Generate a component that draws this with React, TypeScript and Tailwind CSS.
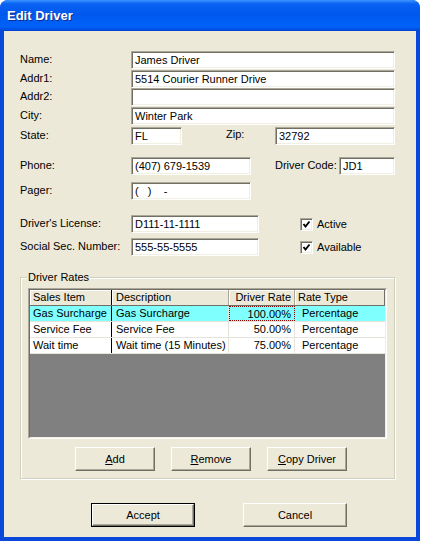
const font = "font-['Liberation_Sans',Arial,sans-serif]";

const sunken =
  "bg-white border border-t-[#aca899] border-l-[#aca899] border-r-white border-b-white shadow-[inset_1px_1px_0_#716f64,inset_-1px_-1px_0_#f1efe2]";

function Field({ value, w }: { value: string; w: string }) {
  return (
    <div className={`${sunken} ${w} h-[18px] shrink-0 px-[3px] text-[11px] leading-[16px] text-black whitespace-pre`}>
      {value}
    </div>
  );
}

function Label({ text, w = "w-[111px]" }: { text: string; w?: string }) {
  return <div className={`${w} shrink-0 text-[11px] leading-[13px] text-black -mt-[2px]`}>{text}</div>;
}

function Check({ label }: { label: string }) {
  return (
    <div className="flex items-center gap-[4px]">
      <div className={`${sunken} flex h-[13px] w-[13px] items-center justify-center`}>
        <svg width="9" height="9" viewBox="0 0 9 9">
          <path d="M1.5 4 L3.5 6.5 L7.5 1.5" fill="none" stroke="#000" strokeWidth="1.9" />
        </svg>
      </div>
      <span className="text-[11px] leading-[13px] text-black">{label}</span>
    </div>
  );
}

function Button({ children, def = false, w }: { children: React.ReactNode; def?: boolean; w: string }) {
  const inner = (
    <div className="flex h-full w-full items-center justify-center border border-t-white border-l-white border-r-[#716f64] border-b-[#716f64] bg-[#ece9d8] shadow-[inset_-1px_-1px_0_#aca899] text-[11px] text-black">
      {children}
    </div>
  );
  return (
    <div className={`${w} h-[24px] shrink-0 ${def ? "border border-black" : ""}`}>{inner}</div>
  );
}

const cols = ["w-[82px]", "w-[117px]", "w-[66px]", "w-[90px]"];

const rows = [
  ["Gas Surcharge", "Gas Surcharge", "100.00%", "Percentage"],
  ["Service Fee", "Service Fee", "50.00%", "Percentage"],
  ["Wait time", "Wait time (15 Minutes)", "75.00%", "Percentage"],
];

function Grid() {
  return (
    <div className="h-[151px] w-[359px] border border-t-[#aca899] border-l-[#aca899] border-r-white border-b-white">
      <div className="flex h-full w-full flex-col border border-t-[#716f64] border-l-[#716f64] border-r-[#f1efe2] border-b-[#f1efe2] bg-[#808080]">
        <div className="flex h-[16px] border-b border-[#716f64] bg-[#ece9d8] text-[11px] leading-[14px] text-black">
          <div className={`${cols[0]} border-r border-r-black pl-[3px] shadow-[inset_1px_1px_0_#fff]`}>Sales Item</div>
          <div className={`${cols[1]} border-r border-r-[#aca899] pl-[4px] shadow-[inset_1px_1px_0_#fff]`}>Description</div>
          <div className={`${cols[2]} border-r border-r-[#aca899] pr-[3px] text-right shadow-[inset_1px_1px_0_#fff]`}>Driver Rate</div>
          <div className={`${cols[3]} border-r border-r-[#716f64] pl-[3px] shadow-[inset_1px_1px_0_#fff]`}>Rate Type</div>
        </div>
        {rows.map((r, i) => {
          const bg = i === 0 ? "bg-[#80ffff]" : "bg-white";
          return (
            <div key={i} className={`flex h-[16px] ${bg} border-b border-[#e5e3da] text-[11px] leading-[15px] text-black`}>
              <div className={`${cols[0]} border-r border-r-black pl-[3px] whitespace-nowrap`}>{r[0]}</div>
              <div className={`${cols[1]} border-r border-r-[#e5e3da] pl-[4px] whitespace-nowrap`}>{r[1]}</div>
              <div
                className={`${cols[2]} pr-[3px] text-right ${
                  i === 0 ? "border border-dotted border-[#8b0000]" : "border-r border-r-[#e5e3da]"
                }`}
              >
                {r[2]}
              </div>
              <div className={`${cols[3]} pl-[7px] whitespace-nowrap`}>{r[3]}</div>
            </div>
          );
        })}
      </div>
    </div>
  );
}

export default function App() {
  return (
    <div className={`min-h-screen bg-white ${font}`}>
      <div className="flex h-[541px] w-[420px] flex-col overflow-hidden rounded-t-[8px] bg-[#0a48dc]">
        <div className="flex h-[31px] shrink-0 items-center bg-[linear-gradient(180deg,#3d95ff_0%,#0a62f2_12%,#0058ee_45%,#0062f8_85%,#0053e6_94%,#0041cf_100%)] pl-[7px]">
          <span className="text-[13px] font-bold text-white [text-shadow:1px_1px_0_#0b2d95]">Edit Driver</span>
        </div>
        <div className="flex flex-1 px-[4px] pb-[4px]">
          <div className="flex-1 bg-[#ece9d8] pl-[16px] pt-[20px]">
            <div className="flex h-[18px] items-center">
              <Label text="Name:" />
              <Field value="James Driver" w="w-[264px]" />
            </div>
            <div className="mt-[1px] flex h-[18px] items-center">
              <Label text="Addr1:" />
              <Field value="5514 Courier Runner Drive" w="w-[264px]" />
            </div>
            <div className="flex h-[18px] items-center">
              <Label text="Addr2:" />
              <Field value="" w="w-[264px]" />
            </div>
            <div className="mt-[1px] flex h-[18px] items-center">
              <Label text="City:" />
              <Field value="Winter Park" w="w-[264px]" />
            </div>
            <div className="mt-[2px] flex h-[18px] items-center">
              <Label text="State:" />
              <Field value="FL" w="w-[51px]" />
              <div className="ml-[44px] w-[49px] text-[11px] leading-[13px] -mt-[4px]">Zip:</div>
              <Field value="32792" w="w-[120px]" />
            </div>
            <div className="mt-[12px] flex h-[18px] items-center">
              <Label text="Phone:" />
              <Field value="(407) 679-1539" w="w-[120px]" />
              <div className="ml-[24px] w-[64px] text-[11px] leading-[13px] -mt-[2px]">Driver Code:</div>
              <Field value="JD1" w="w-[56px]" />
            </div>
            <div className="mt-[7px] flex h-[18px] items-center">
              <Label text="Pager:" />
              <Field value="(   )    -" w="w-[120px]" />
            </div>
            <div className="mt-[15px] flex h-[18px] items-center">
              <Label text="Driver's License:" />
              <Field value="D111-11-1111" w="w-[128px]" />
              <div className="ml-[41px]">
                <Check label="Active" />
              </div>
            </div>
            <div className="mt-[5px] flex h-[18px] items-center">
              <Label text="Social Sec. Number:" />
              <Field value="555-55-5555" w="w-[128px]" />
              <div className="ml-[41px]">
                <Check label="Available" />
              </div>
            </div>

            <div className="relative mt-[21px] h-[202px] w-[375px] border border-[#d0d0bf] shadow-[inset_1px_1px_0_#fff,1px_1px_0_#fff] pl-[7px] pt-[10px]">
              <span className="absolute -top-[7px] left-[6px] bg-[#ece9d8] px-[1px] text-[11px] leading-[13px] text-black">
                Driver Rates
              </span>
              <Grid />
              <div className="mt-[8px] flex gap-[16px] pl-[47px]">
                <Button w="w-[80px]">
                  <span><span className="underline">A</span>dd</span>
                </Button>
                <Button w="w-[80px]">
                  <span><span className="underline">R</span>emove</span>
                </Button>
                <Button w="w-[80px]">
                  <span><span className="underline">C</span>opy Driver</span>
                </Button>
              </div>
            </div>

            <div className="mt-[24px] flex gap-[48px] pl-[71px]">
              <Button def w="w-[104px]">Accept</Button>
              <Button w="w-[104px]">Cancel</Button>
            </div>
          </div>
        </div>
      </div>
    </div>
  );
}
